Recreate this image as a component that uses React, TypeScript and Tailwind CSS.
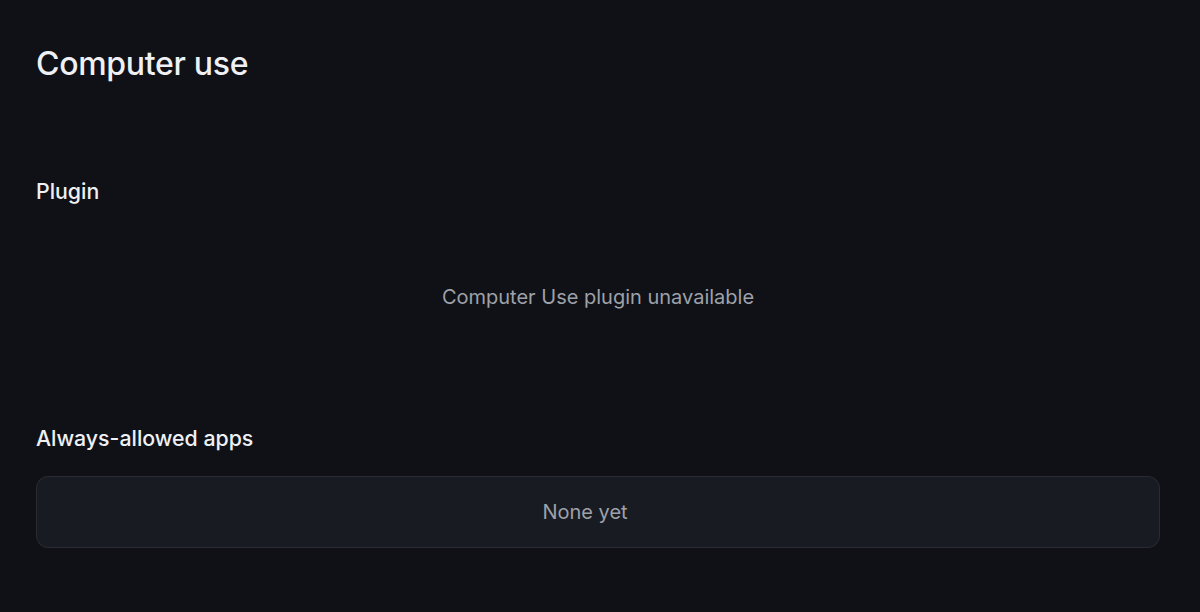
export default function App() {
  return (
    <div
      className="w-[1200px] h-[612px] bg-[#0f1117] overflow-hidden pl-[36px] pr-[40px] pt-[46px]"
      style={{ fontFamily: 'Inter, "Noto Sans", sans-serif' }}
    >
      <h1 className="text-[32px] leading-[36px] font-medium text-[#eef0f4] tracking-[-0.3px]">
        Computer use
      </h1>
      <h2 className="mt-[95px] text-[21.3px] leading-[28px] font-medium text-[#eef0f4]">
        Plugin
      </h2>
      <div className="mt-[78px] text-center text-[20px] leading-[28px] text-[#9ea1a9]">
        Computer Use plugin unavailable
      </div>
      <h2 className="mt-[113px] text-[21.3px] leading-[28px] font-medium text-[#eef0f4]">
        Always-allowed apps
      </h2>
      <div className="mt-[24px] h-[72px] rounded-[12px] border border-[#2a2c33] bg-[#191b22] flex items-center justify-center pr-[26px]">
        <span className="text-[20px] leading-[28px] text-[#9ea1a9]">None yet</span>
      </div>
    </div>
  );
}
